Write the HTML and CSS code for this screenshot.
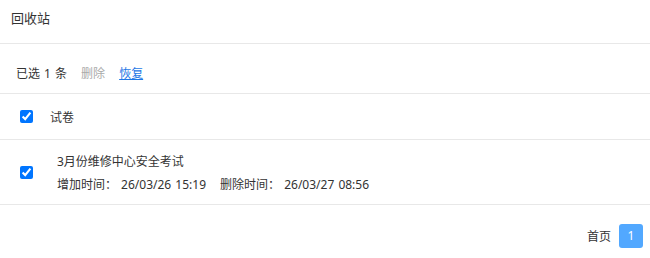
FILE: index.html
```html
<!DOCTYPE html>
<html lang="zh-CN">
<head>
    <meta charset="UTF-8">
    <meta name="viewport" content="width=device-width, initial-scale=1.0">
    <title>回收站</title>
    <link rel="stylesheet" href="styles.css">
</head>
<body>

    <div class="page-head">回收站</div>

    <div class="toolbar">
        <span class="selected">已选 1 条</span>
        <span class="act disabled">删除</span>
        <a class="act link" href="#">恢复</a>
    </div>

    <div class="table">
        <div class="row head-row">
            <div class="cell-check"><input type="checkbox" checked></div>
            <div class="cell-name">试卷</div>
        </div>
        <div class="row item-row">
            <div class="cell-check"><input type="checkbox" checked></div>
            <div class="cell-name item">
                <p class="item-title">3月份维修中心安全考试</p>
                <p class="item-time">
                    <span>增加时间： 26/03/26 15:19</span>
                    <span>删除时间： 26/03/27 08:56</span>
                </p>
            </div>
        </div>
    </div>

    <div class="pager">
        <span class="pager-first">首页</span>
        <span class="pager-num">1</span>
    </div>

</body>
</html>
```

FILE: styles.css
```css
/* 回收站页面 */
* {
    margin: 0;
    padding: 0;
    box-sizing: border-box;
}

body {
    font-family: "Noto Sans", "Noto Sans CJK SC", sans-serif;
    font-size: 12px;
    color: #333;
    background: #fff;
}

.page-head {
    height: 44px;
    padding: 8px 11px 0;
    font-size: 13px;
    line-height: 20px;
    border-bottom: 1px solid #e8e8e8;
}

.toolbar {
    height: 50px;
    padding: 21px 16px 0;
    line-height: 18px;
    display: flex;
    gap: 14px;
    border-bottom: 1px solid #e8e8e8;
}

.selected {
    word-spacing: 1px;
}

.act.disabled {
    color: #aaa;
}

.act.link {
    color: #1e78e6;
    text-decoration: underline;
}

.row {
    display: flex;
    align-items: center;
    border-bottom: 1px solid #e8e8e8;
}

.head-row {
    height: 46px;
}

.item-row {
    height: 65px;
}

.cell-check {
    width: 50px;
    padding-left: 20px;
    display: flex;
    align-items: center;
}

.cell-check input {
    margin: 0;
    width: 13px;
    height: 13px;
}

.item {
    padding: 2px 0 0 7px;
}

.item-title {
    line-height: 18px;
    margin-bottom: 5px;
}

.item-time {
    line-height: 18px;
    display: flex;
    gap: 14px;
    word-spacing: 1px;
}

.pager {
    display: flex;
    justify-content: flex-end;
    align-items: center;
    gap: 8px;
    padding: 19px 7px 0;
}

.pager-num {
    width: 24px;
    height: 24px;
    line-height: 24px;
    text-align: center;
    background: #52a8ff;
    color: #fff;
    border-radius: 3px;
}
```
